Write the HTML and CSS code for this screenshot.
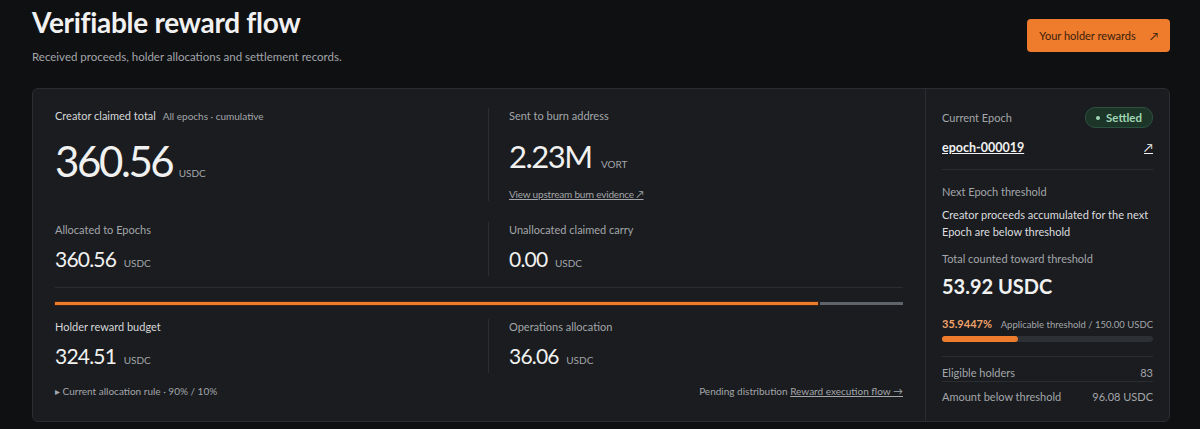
FILE: index.html
```html
<!DOCTYPE html>
<html lang="en">
<head>
  <meta charset="UTF-8" />
  <meta name="viewport" content="width=device-width, initial-scale=1.0" />
  <title>Verifiable reward flow</title>
  <link rel="stylesheet" href="styles.css">
</head>
<body>
  <div class="page">
    <header class="page-head">
      <div>
        <h1>Verifiable reward flow</h1>
        <p class="sub">Received proceeds, holder allocations and settlement records.</p>
      </div>
      <a class="btn" href="#">Your holder rewards <span class="arrow">↗</span></a>
    </header>

    <section class="flow-card">
      <div class="flow-main">
        <div class="stat-grid top">
          <div class="stat">
            <div class="label">Creator claimed total <span class="hint">All epochs · cumulative</span></div>
            <div class="value xl">360.56 <span class="unit">USDC</span></div>
          </div>
          <div class="stat side">
            <div class="label">Sent to burn address</div>
            <div class="value lg">2.23M <span class="unit">VORT</span></div>
            <a class="link" href="#">View upstream burn evidence ↗</a>
          </div>
          <div class="stat">
            <div class="label">Allocated to Epochs</div>
            <div class="value">360.56 <span class="unit">USDC</span></div>
          </div>
          <div class="stat side">
            <div class="label">Unallocated claimed carry</div>
            <div class="value">0.00 <span class="unit">USDC</span></div>
          </div>
        </div>

        <div class="split-bar">
          <span class="holder" style="width: 90%"></span>
          <span class="ops"></span>
        </div>

        <div class="stat-grid bottom">
          <div class="stat">
            <div class="label">Holder reward budget</div>
            <div class="value">324.51 <span class="unit">USDC</span></div>
          </div>
          <div class="stat side">
            <div class="label">Operations allocation</div>
            <div class="value">36.06 <span class="unit">USDC</span></div>
          </div>
        </div>

        <div class="foot">
          <span class="rule">▸ Current allocation rule · 90% / 10%</span>
          <span class="pending">Pending distribution <a class="link" href="#">Reward execution flow →</a></span>
        </div>
      </div>

      <aside class="epoch">
        <div class="epoch-head">
          <span class="label">Current Epoch</span>
          <span class="badge"><i class="dot"></i>Settled</span>
        </div>
        <div class="epoch-id">
          <a href="#">epoch-000019</a>
          <a class="ext" href="#">↗</a>
        </div>

        <div class="threshold">
          <div class="label">Next Epoch threshold</div>
          <p class="note">Creator proceeds accumulated for the next Epoch are below threshold</p>
          <div class="label">Total counted toward threshold</div>
          <div class="total">53.92 USDC</div>
          <div class="pct-row">
            <span class="pct">35.9447%</span>
            <span class="of">Applicable threshold / 150.00 USDC</span>
          </div>
          <div class="progress"><span style="width: 35.9447%"></span></div>
        </div>

        <div class="kv">
          <span>Eligible holders</span>
          <span>83</span>
        </div>
        <div class="kv">
          <span>Amount below threshold</span>
          <span>96.08 USDC</span>
        </div>
      </aside>
    </section>
  </div>
</body>
</html>
```

FILE: styles.css
```css
:root {
  --bg: #0f1012;
  --card: #1a1c1f;
  --line: #2a2d31;
  --text: #f1f1f1;
  --muted: #a3a6aa;
  --accent: #ef7c2d;
}
body {
  margin: 0;
  background: var(--bg);
  color: var(--text);
  font-family: "Segoe UI", Lato, sans-serif;
}
a {
  color: inherit;
}
.page {
  padding: 4px 30px 0 32px;
}
.page-head {
  display: flex;
  justify-content: space-between;
  align-items: flex-start;
  height: 84px;
}
h1 {
  margin: 0;
  font-size: 28px;
  font-weight: 700;
  letter-spacing: -0.3px;
  line-height: 36px;
}
.sub {
  margin: 10px 0 0;
  font-size: 11.5px;
  color: var(--muted);
}
.btn {
  margin-top: 15px;
  display: flex;
  align-items: center;
  gap: 14px;
  height: 33px;
  padding: 0 12px;
  background: var(--accent);
  color: #3a1e0b;
  font-size: 11px;
  text-decoration: none;
  border-radius: 4px;
}
.btn .arrow {
  font-size: 11px;
}

/* main card */
.flow-card {
  display: flex;
  background: var(--card);
  border: 1px solid var(--line);
  border-radius: 6px;
  height: 332px;
}
.flow-main {
  flex: 1;
  padding: 19px 22px 0 22px;
}
.stat-grid {
  display: grid;
  grid-template-columns: 433px 1fr;
}
.stat-grid.top {
  row-gap: 21px;
  padding-bottom: 11px;
  border-bottom: 1px solid var(--line);
}
.stat.side {
  border-left: 1px solid var(--line);
  padding-left: 20px;
}
.label {
  font-size: 11px;
  line-height: 16px;
  color: var(--muted);
}
.stat:first-child .label {
  color: #d6d7d9;
}
.hint {
  margin-left: 4px;
  font-size: 10px;
  color: var(--muted);
}
.value {
  margin-top: 8px;
  font-size: 21px;
  line-height: 26px;
  letter-spacing: -0.8px;
}
.value.xl {
  margin-top: 14px;
  font-size: 42px;
  line-height: 46px;
  letter-spacing: -2.4px;
}
.value.lg {
  margin-top: 14px;
  font-size: 31px;
  line-height: 36px;
  letter-spacing: -1.5px;
}
.unit {
  font-size: 10px;
  letter-spacing: 0;
  color: var(--muted);
  margin-left: 3px;
}
.value.xl .unit {
  margin-left: -2px;
}
.link {
  display: inline-block;
  margin-top: 6px;
  font-size: 10px;
  letter-spacing: -0.2px;
  color: var(--muted);
}

/* 90 / 10 split */
.split-bar {
  display: flex;
  gap: 2px;
  margin-top: 14px;
  height: 3px;
}
.split-bar .holder {
  background: var(--accent);
  box-shadow: 0 0 0 1px #3a2313;
}
.split-bar .ops {
  flex: 1;
  background: #5f646b;
}
.stat-grid.bottom {
  margin-top: 14px;
}
.foot {
  display: flex;
  justify-content: space-between;
  margin-top: 12px;
  font-size: 10px;
  color: var(--muted);
}
.foot .link {
  margin: 0;
  letter-spacing: 0;
}

/* current epoch side panel */
.epoch {
  width: 211px;
  border-left: 1px solid var(--line);
  padding: 18px 16px 0 16px;
}
.epoch-head {
  display: flex;
  justify-content: space-between;
  align-items: center;
}
.badge {
  display: flex;
  align-items: center;
  gap: 6px;
  height: 19px;
  padding: 0 10px;
  border-radius: 10px;
  background: #1d3529;
  border: 1px solid #2b5140;
  color: #9fd6b3;
  font-size: 11.5px;
  font-weight: 700;
}
.dot {
  width: 4px;
  height: 4px;
  border-radius: 50%;
  background: #9fd6b3;
}
.epoch-id {
  display: flex;
  justify-content: space-between;
  margin-top: 12px;
  padding-bottom: 14px;
  border-bottom: 1px solid var(--line);
  font-size: 12.5px;
  font-weight: 700;
}
.epoch-id .ext {
  font-weight: 400;
  font-size: 12px;
}
.threshold {
  padding: 14px 0 14px;
  border-bottom: 1px solid var(--line);
}
.note {
  margin: 6px 0 11px;
  font-size: 11px;
  line-height: 17px;
  color: #dcdddf;
}
.total {
  margin-top: 5px;
  font-size: 20px;
  font-weight: 700;
  line-height: 28px;
}
.pct-row {
  display: flex;
  justify-content: space-between;
  align-items: baseline;
  margin-top: 17px;
}
.pct {
  font-size: 11px;
  font-weight: 700;
  color: #f0a26a;
}
.of {
  font-size: 9.5px;
  color: var(--muted);
}
.progress {
  margin-top: 6px;
  height: 6px;
  background: #2d3034;
  border-radius: 3px;
}
.progress span {
  display: block;
  height: 100%;
  background: var(--accent);
  border-radius: 3px;
}
.kv {
  display: flex;
  justify-content: space-between;
  padding: 9px 0 2px;
  font-size: 11px;
  color: var(--muted);
}
.kv + .kv {
  border-top: 1px solid var(--line);
  padding-top: 8px;
}
```
